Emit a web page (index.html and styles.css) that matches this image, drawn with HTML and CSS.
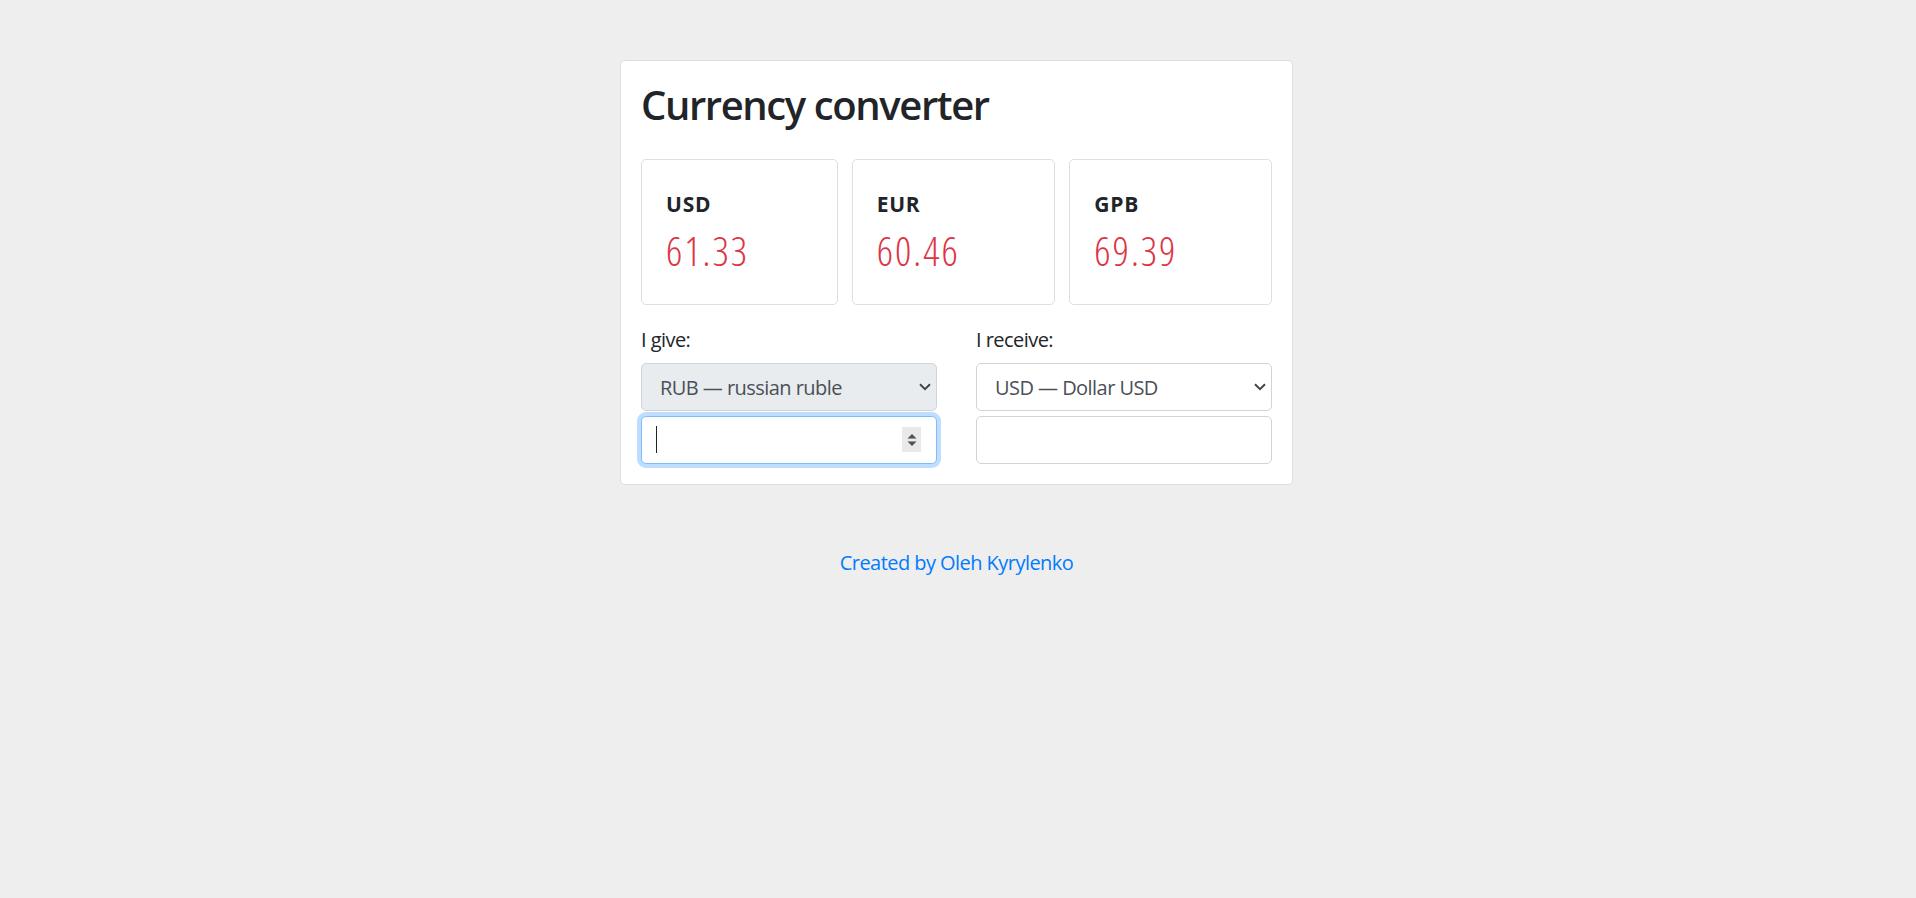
FILE: index.html
```html
<!DOCTYPE html>
<html lang="en">
<head>
<meta charset="utf-8">
<title>Currency converter</title>
<link rel="stylesheet" href="styles.css">
</head>
<body>
<main class="page">
  <section class="converter">
    <h1 class="title">Currency converter</h1>
    <div class="rates">
      <div class="rate">
        <h5 class="rate-code">USD</h5>
        <div class="rate-value">61.33</div>
      </div>
      <div class="rate">
        <h5 class="rate-code">EUR</h5>
        <div class="rate-value">60.46</div>
      </div>
      <div class="rate">
        <h5 class="rate-code">GPB</h5>
        <div class="rate-value">69.39</div>
      </div>
    </div>
    <div class="exchange">
      <div class="side">
        <label class="side-label" for="give">I give:</label>
        <select class="field select select-disabled">
          <option>RUB — russian ruble</option>
        </select>
        <div class="input-wrap">
          <input id="give" class="field input input-focus" type="number">
          <span class="caret"></span>
          <span class="spinner">
            <svg width="10" height="20" viewBox="0 0 10 20"><path d="M0.5 8.5 L5 4 L9.5 8.5 Z" fill="#505050"/><path d="M0.5 11.5 L5 16 L9.5 11.5 Z" fill="#505050"/></svg>
          </span>
        </div>
      </div>
      <div class="side">
        <label class="side-label" for="receive">I receive:</label>
        <select class="field select">
          <option>USD — Dollar USD</option>
        </select>
        <div class="input-wrap">
          <input id="receive" class="field input" type="text">
        </div>
      </div>
    </div>
  </section>
  <footer class="footer">
    <a class="footer-link" href="#">Created by Oleh Kyrylenko</a>
  </footer>
</main>
</body>
</html>
```
FILE: styles.css
```css
* {
  box-sizing: border-box;
}

body {
  margin: 0;
  background: #eeeeee;
  font-family: "Open Sans", "Noto Sans", sans-serif;
  font-size: 20px;
  line-height: 1.5;
  letter-spacing: -0.55px;
  color: #212529;
}

.page {
  padding: 60px 3px 0 0;
}

.converter {
  width: 673px;
  margin: 0 auto;
  background: #ffffff;
  border: 1px solid rgba(0, 0, 0, 0.125);
  border-radius: 5px;
  padding: 20px;
}

.title {
  margin: 0 0 30px;
  font-size: 40px;
  font-weight: 600;
  line-height: 1.2;
  letter-spacing: -1.4px;
}

.rates {
  display: grid;
  grid-template-columns: 196fr 203fr 202fr;
  gap: 14px;
}

.rate {
  height: 146px;
  border: 1px solid rgba(0, 0, 0, 0.125);
  border-radius: 5px;
  padding: 32px 24px 0;
}

.rate-code {
  margin: 0 0 10px;
  font-size: 21px;
  font-weight: 700;
  line-height: 1.2;
  letter-spacing: 0.8px;
}

.rate-value {
  font-size: 40px;
  font-weight: 300;
  font-stretch: 80%;
  line-height: 1.2;
  letter-spacing: 2px;
  color: #dc3545;
}

.exchange {
  display: grid;
  grid-template-columns: 1fr 1fr;
  column-gap: 39px;
  margin-top: 20px;
}

.side-label {
  display: block;
  margin-bottom: 8px;
}

.field {
  display: block;
  width: 100%;
  height: 48px;
  font-family: inherit;
  font-size: 20px;
  letter-spacing: inherit;
  color: #495057;
  background: #ffffff;
  border: 1px solid #ced4da;
  border-radius: 5px;
  padding: 0 18px;
  outline: none;
}

.select {
  appearance: none;
  -webkit-appearance: none;
  background-image: url("data:image/svg+xml,%3csvg xmlns='http://www.w3.org/2000/svg' viewBox='0 0 12 8'%3e%3cpath fill='none' stroke='%23444' stroke-width='2' d='M1 1.3l5 4.8 5-4.8'/%3e%3c/svg%3e");
  background-repeat: no-repeat;
  background-position: right 5px center;
  background-size: 12px 8px;
}

.select-disabled {
  background-color: #e9ecef;
}

.input-wrap {
  position: relative;
  margin-top: 5px;
}

.input {
  appearance: textfield;
  -moz-appearance: textfield;
}

.input::-webkit-outer-spin-button,
.input::-webkit-inner-spin-button {
  -webkit-appearance: none;
  margin: 0;
}

.input-focus {
  border-color: #80bdff;
  box-shadow: 0 0 0 4px rgba(0, 123, 255, 0.25);
}

.caret {
  position: absolute;
  left: 15px;
  top: 10px;
  width: 1px;
  height: 27px;
  background: #222222;
}

.spinner {
  position: absolute;
  right: 16px;
  top: 11px;
  width: 19px;
  height: 25px;
  background: #e9e9e9;
  display: flex;
  align-items: center;
  justify-content: center;
}

.footer {
  text-align: center;
  margin-top: 63px;
}

.footer-link {
  color: #007bff;
  text-decoration: none;
}
```
